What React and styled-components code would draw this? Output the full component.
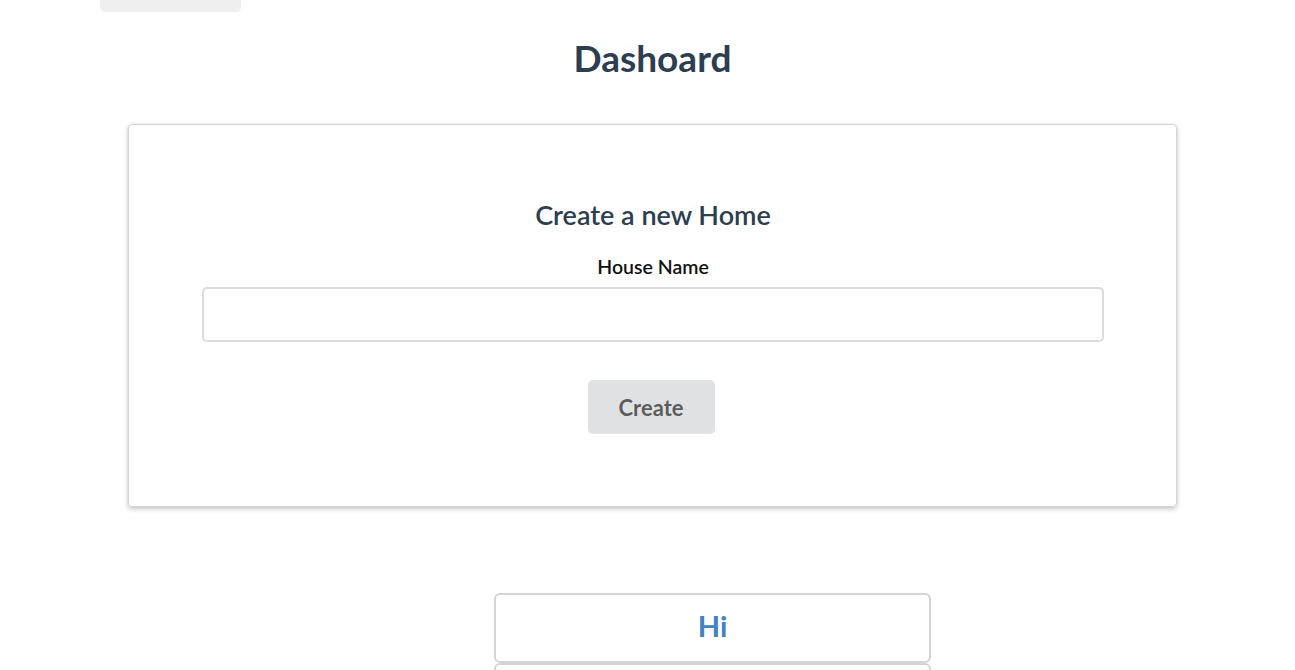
import React from "react";
import styled, { createGlobalStyle } from "styled-components";

const Global = createGlobalStyle`
  html, body { margin: 0; padding: 0; background: #fff; }
  body { font-family: Lato, "Open Sans", sans-serif; overflow: hidden; }
`;

const Page = styled.div`
  width: 1295px;
  height: 670px;
  overflow: hidden;
  display: flex;
  flex-direction: column;
  & > * { flex-shrink: 0; }
`;

const TopTab = styled.div`
  margin-left: 100px;
  width: 141px;
  height: 12px;
  background: #efefef;
  border-radius: 0 0 5px 5px;
`;

const Title = styled.h1`
  margin: 26px 0 0 10px;
  text-align: center;
  font-size: 37px;
  font-weight: 700;
  line-height: 40px;
  color: #2c3e50;
`;

const Card = styled.div`
  margin: 46px 118px 0 128px;
  height: 383px;
  border: 1px solid #d4d4d5;
  border-radius: 4px;
  box-shadow: 0 2px 5px rgba(0, 0, 0, 0.22), 0 0 2px rgba(0, 0, 0, 0.08);
  display: flex;
  flex-direction: column;
  align-items: center;
  padding: 74px 72px 0 73px;
  box-sizing: border-box;
`;

const CardTitle = styled.h2`
  margin: 0;
  font-size: 27px;
  font-weight: 600;
  line-height: 32px;
  color: #2c3e50;
`;

const Label = styled.label`
  margin-top: 25px;
  font-size: 19.5px;
  font-weight: 600;
  color: #111;
  line-height: 22px;
`;

const Input = styled.input`
  margin-top: 9px;
  width: 100%;
  height: 55px;
  box-sizing: border-box;
  border: 2px solid #dcdcdc;
  border-radius: 5px;
  outline: none;
  font-family: inherit;
  font-size: 18px;
  padding: 0 14px;
`;

const Button = styled.button`
  margin-top: 38px;
  margin-right: 4px;
  width: 127px;
  height: 54px;
  border: none;
  border-radius: 5px;
  background: #e0e1e2;
  color: rgba(0, 0, 0, 0.6);
  font-family: inherit;
  font-weight: 700;
  font-size: 22px;
  cursor: pointer;
`;

const List = styled.div`
  margin: 86px 0 0 494px;
  width: 437px;
  display: flex;
  flex-direction: column;
  & > * { flex-shrink: 0; }
`;

const Item = styled.div`
  height: 70px;
  box-sizing: border-box;
  border: 2px solid #d4d4d5;
  border-radius: 6px;
  padding-bottom: 6px;
  display: flex;
  align-items: center;
  justify-content: center;
  font-size: 29px;
  font-weight: 700;
  color: #4183c4;
`;

export default function App() {
  return (
    <Page>
      <Global />
      <TopTab />
      <Title>Dashoard</Title>
      <Card>
        <CardTitle>Create a new Home</CardTitle>
        <Label>House Name</Label>
        <Input />
        <Button>Create</Button>
      </Card>
      <List>
        <Item>Hi</Item>
        <Item />
      </List>
    </Page>
  );
}
